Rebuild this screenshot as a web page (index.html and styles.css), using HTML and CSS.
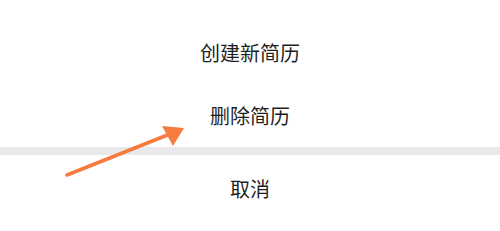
FILE: index.html
```html
<!DOCTYPE html>
<html lang="zh">
<head>
    <meta charset="UTF-8">
    <meta name="viewport" content="width=device-width, initial-scale=1.0">
    <title>简历操作</title>
    <link rel="stylesheet" href="styles.css">
</head>
<body>
    <div class="sheet">
        <div class="menu">
            <div class="item item-first">创建新简历</div>
            <div class="item item-second">删除简历</div>
        </div>
        <div class="divider"></div>
        <div class="item cancel">取消</div>

        <!-- pointer arrow over the menu -->
        <svg class="arrow" width="500" height="231" viewBox="0 0 500 231">
            <line x1="67" y1="175" x2="170" y2="134" stroke="#f77a3f" stroke-width="3.5" stroke-linecap="round"/>
            <polygon points="162,126 184,128 173,146" fill="#f77a3f"/>
        </svg>
    </div>
</body>
</html>
```

FILE: styles.css
```css
*{
    margin: 0;
    padding: 0;
    box-sizing: border-box;
}
body{
    background: #fff;
    width: 500px;
    height: 231px;
    overflow: hidden;
    font-family: "Noto Sans CJK SC", "Noto Sans", sans-serif;
}
.sheet{
    position: relative;
    width: 500px;
    height: 231px;
    background: #fff;
}
.menu{
    padding-top: 20px;
}
.item{
    display: flex;
    align-items: center;
    justify-content: center;
    font-size: 20px;
    color: #1f1f1f;
}
.item-first{
    height: 64px;
}
.item-second{
    height: 63px;
}
.divider{
    height: 8px;
    background: #e9e9eb;
}
.cancel{
    height: 66px;
}
.arrow{
    position: absolute;
    left: 0;
    top: 0;
    pointer-events: none;
}
```
